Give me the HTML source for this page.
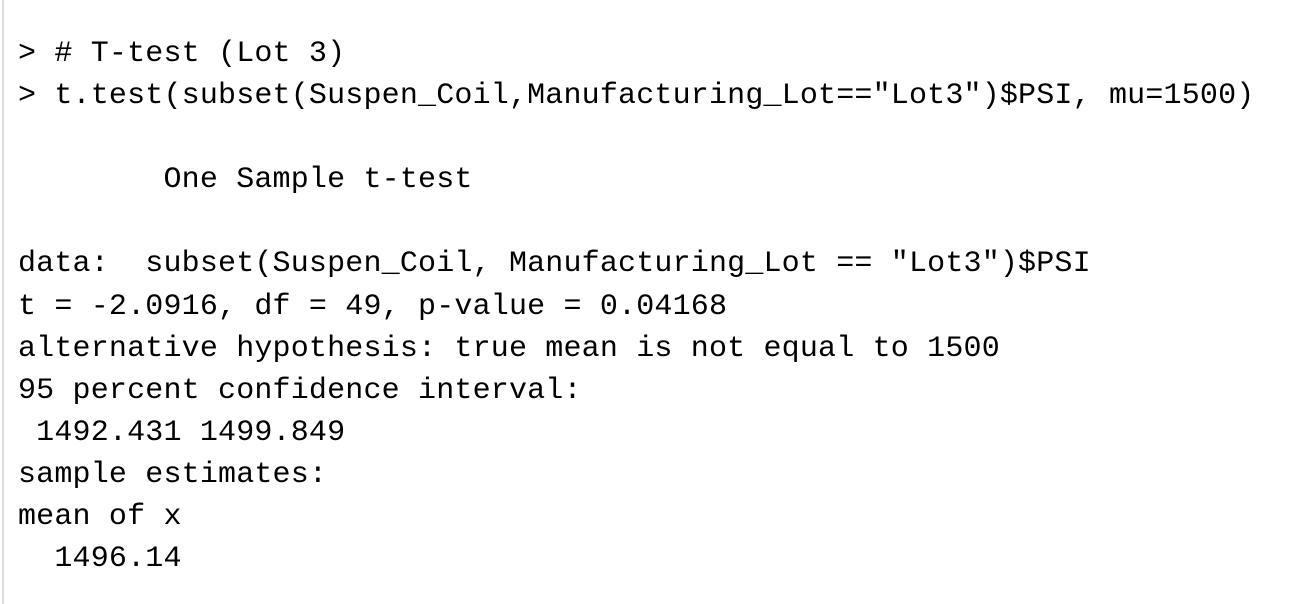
<!DOCTYPE html>
<html><head><style>
html,body{margin:0;padding:0;background:#fff;width:1298px;height:604px;overflow:hidden}
.b{position:absolute;left:2px;top:0;width:2px;height:604px;background:#dcdcdc}
pre{position:absolute;left:18px;top:33px;margin:0;font-family:"Liberation Mono",monospace;font-size:30px;line-height:42.1px;color:#000;letter-spacing:0.18px}
</style></head><body>
<div class="b"></div>
<pre>&gt; # T-test (Lot 3)
&gt; t.test(subset(Suspen_Coil,Manufacturing_Lot=="Lot3")$PSI, mu=1500)

        One Sample t-test

data:  subset(Suspen_Coil, Manufacturing_Lot == "Lot3")$PSI
t = -2.0916, df = 49, p-value = 0.04168
alternative hypothesis: true mean is not equal to 1500
95 percent confidence interval:
 1492.431 1499.849
sample estimates:
mean of x
  1496.14 </pre>
</body></html>
